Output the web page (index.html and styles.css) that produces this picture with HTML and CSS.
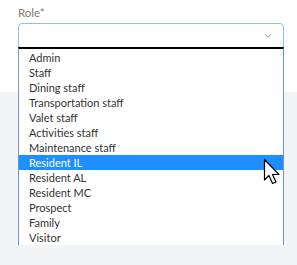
FILE: index.html
```html
<!DOCTYPE html>
<html lang="en">
<head>
  <meta charset="UTF-8" />
  <title>Role</title>
  <link rel="stylesheet" href="styles.css">
</head>
<body>
  <div class="card">
    <label class="field-label">Role*</label>
    <div class="select-wrap">
      <div class="select-box">
        <svg class="chevron" width="8" height="5" viewBox="0 0 8 5"><path d="M1 1l3 3 3-3" fill="none" stroke="#aaa" stroke-width="1"/></svg>
      </div>
      <ul class="options">
        <li>Admin</li>
        <li>Staff</li>
        <li>Dining staff</li>
        <li>Transportation staff</li>
        <li>Valet staff</li>
        <li>Activities staff</li>
        <li>Maintenance staff</li>
        <li class="active">Resident IL</li>
        <li>Resident AL</li>
        <li>Resident MC</li>
        <li>Prospect</li>
        <li>Family</li>
        <li>Visitor</li>
      </ul>
      <svg class="cursor" width="20" height="28" viewBox="0 0 20 28">
        <path d="M1.5 1.5 L1.5 22 L6 17.5 L9.5 25.5 L13 24 L9.5 16.5 L16 16.5 Z" fill="#fff" stroke="#000" stroke-width="1.2" stroke-linejoin="round"/>
      </svg>
    </div>
  </div>
</body>
</html>
```

FILE: styles.css
```css
* {
  box-sizing: border-box;
  margin: 0;
  padding: 0;
}

body {
  background-color: #f3f4f6;
  font-family: 'Lato', 'Noto Sans', sans-serif;
  font-size: 11px;
  width: 297px;
  height: 265px;
  overflow: hidden;
}

.card {
  background-color: #fff;
  height: 92px;
  padding: 6px 13px 0 18px;
}

.field-label {
  display: block;
  color: #857a72;
  font-size: 11.5px;
  line-height: 14px;
  height: 17px;
}

.select-wrap {
  position: relative;
}

.select-box {
  height: 26px;
  border: 1px solid #8ec0f3;
  border-radius: 4px;
  display: flex;
  align-items: center;
  justify-content: flex-end;
  padding-right: 11px;
  padding-bottom: 2px;
}

.options {
  position: absolute;
  top: 24px;
  left: 0;
  right: 0;
  list-style: none;
  background-color: #fff;
  border-top: 2px solid #000;
  border-left: 1px solid #6e95d8;
  border-right: 1px solid #6e95d8;
  padding-top: 1px;
}

.options li {
  height: 15px;
  line-height: 15px;
  padding-left: 10px;
  color: #333;
  white-space: nowrap;
}

.options li.active {
  background-color: #1e8fff;
  color: #fff;
}

.cursor {
  position: absolute;
  left: 245px;
  top: 135px;
}
```
